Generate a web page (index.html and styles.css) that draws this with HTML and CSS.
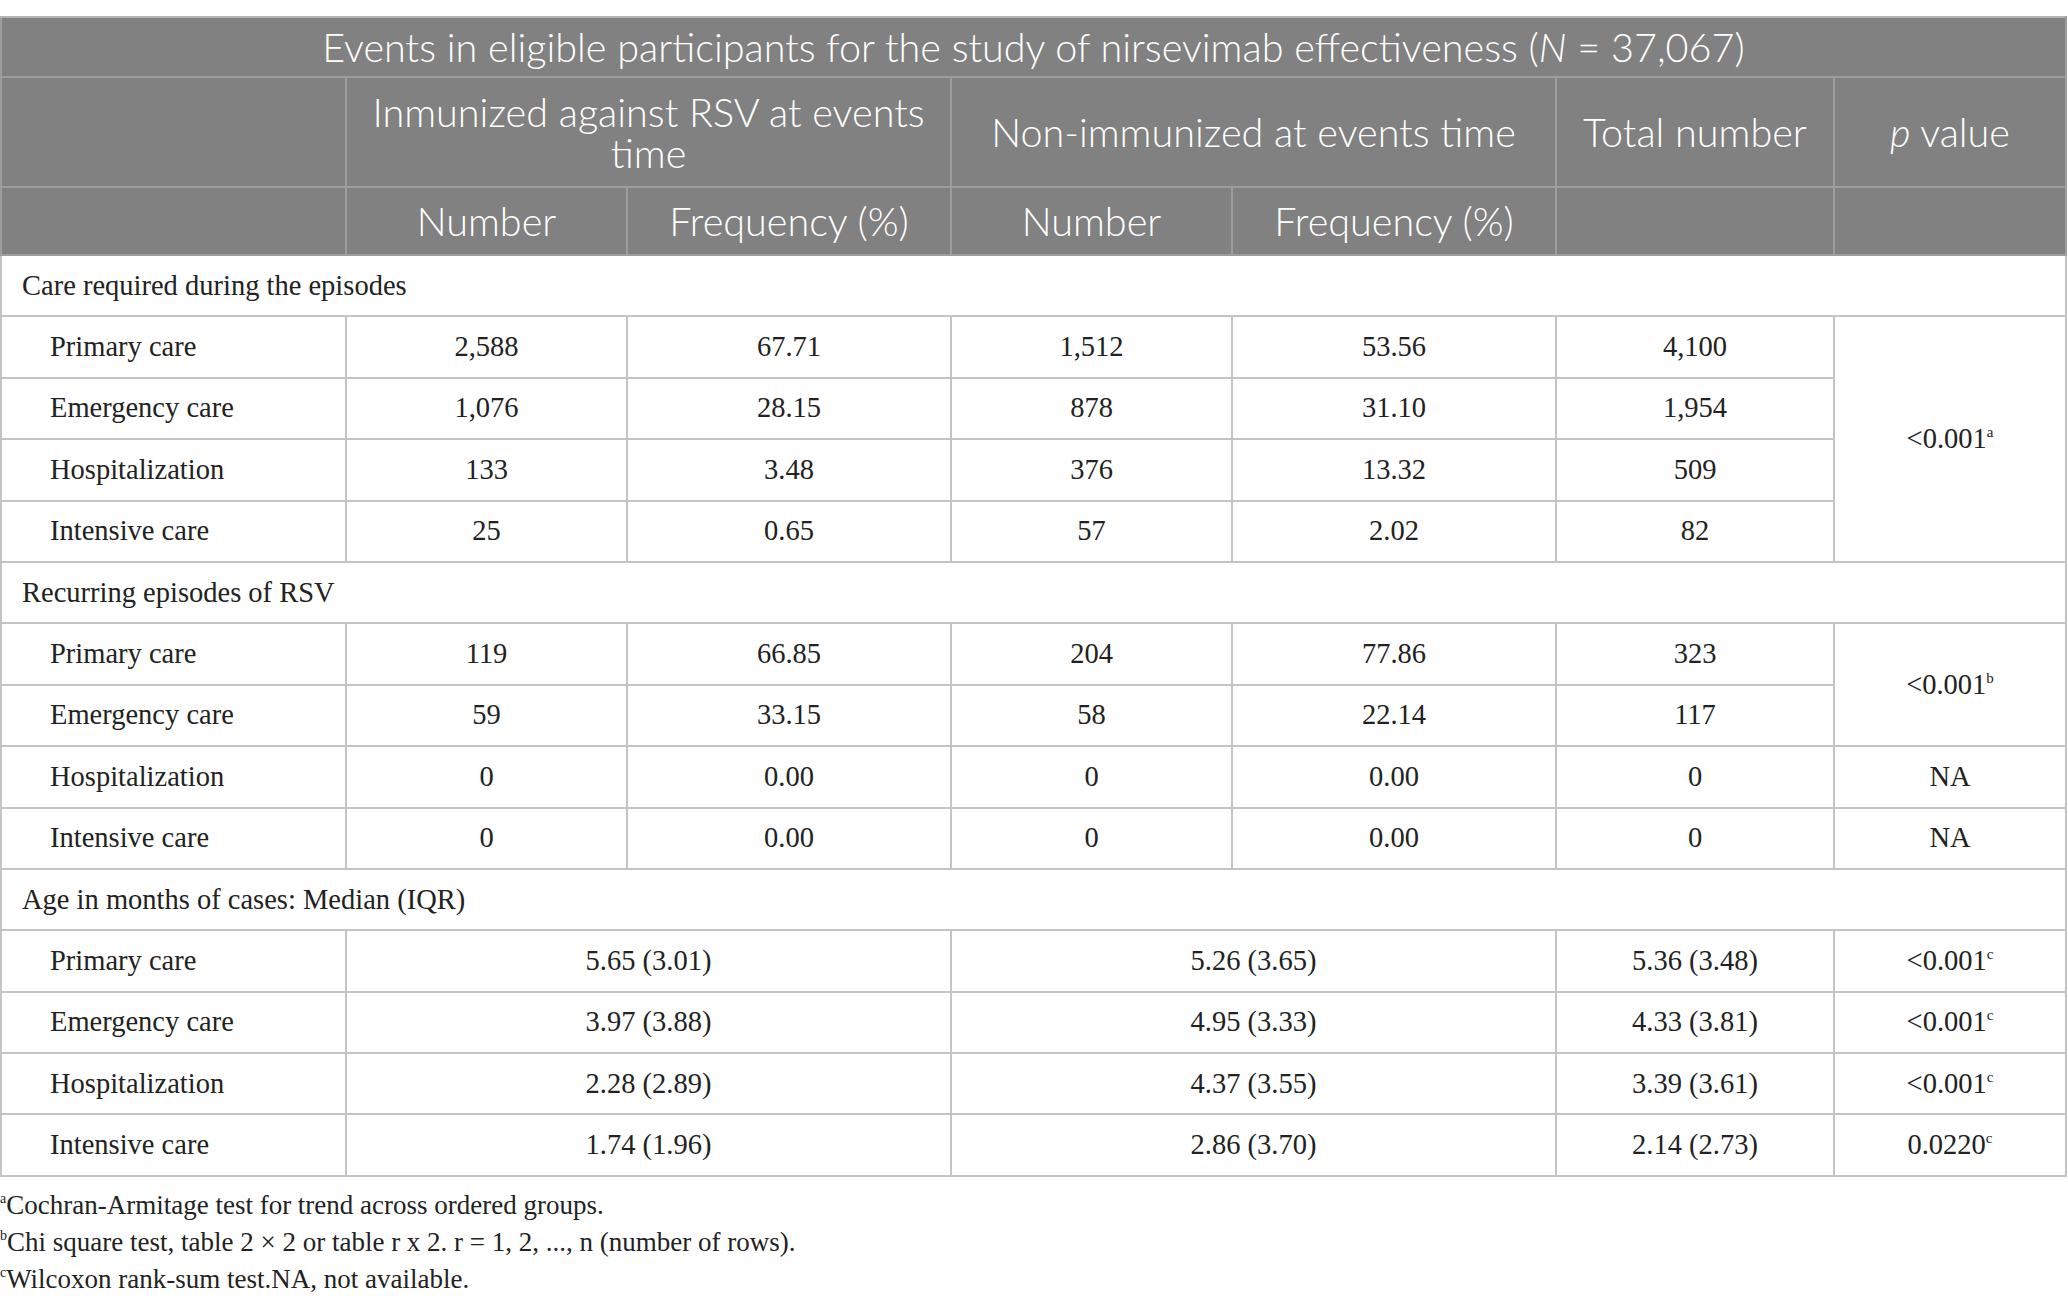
FILE: index.html
```html
<!DOCTYPE html>
<html lang="en">
<head>
  <meta charset="UTF-8">
  <title>Events in eligible participants</title>
  <link rel="stylesheet" href="styles.css">
</head>
<body>
  <div class="page">
    <table class="events">
      <colgroup>
        <col class="c-label">
        <col class="c-num">
        <col class="c-freq">
        <col class="c-num">
        <col class="c-freq">
        <col class="c-total">
        <col class="c-p">
      </colgroup>
      <thead>
        <tr class="h-title">
          <th colspan="7">Events in eligible participants for the study of nirsevimab effectiveness (<i>N</i> = 37,067)</th>
        </tr>
        <tr class="h-group">
          <th></th>
          <th colspan="2" class="wrap">Inmunized against RSV at events time</th>
          <th colspan="2">Non-immunized at events time</th>
          <th>Total number</th>
          <th><i>p</i> value</th>
        </tr>
        <tr class="h-sub">
          <th></th>
          <th>Number</th>
          <th>Frequency (%)</th>
          <th>Number</th>
          <th>Frequency (%)</th>
          <th></th>
          <th></th>
        </tr>
      </thead>
      <tbody>
        <tr class="section"><td colspan="7">Care required during the episodes</td></tr>
        <tr>
          <td class="item">Primary care</td>
          <td>2,588</td><td>67.71</td><td>1,512</td><td>53.56</td><td>4,100</td>
          <td rowspan="4">&lt;0.001<sup>a</sup></td>
        </tr>
        <tr>
          <td class="item">Emergency care</td>
          <td>1,076</td><td>28.15</td><td>878</td><td>31.10</td><td>1,954</td>
        </tr>
        <tr>
          <td class="item">Hospitalization</td>
          <td>133</td><td>3.48</td><td>376</td><td>13.32</td><td>509</td>
        </tr>
        <tr>
          <td class="item">Intensive care</td>
          <td>25</td><td>0.65</td><td>57</td><td>2.02</td><td>82</td>
        </tr>

        <tr class="section"><td colspan="7">Recurring episodes of RSV</td></tr>
        <tr>
          <td class="item">Primary care</td>
          <td>119</td><td>66.85</td><td>204</td><td>77.86</td><td>323</td>
          <td rowspan="2">&lt;0.001<sup>b</sup></td>
        </tr>
        <tr>
          <td class="item">Emergency care</td>
          <td>59</td><td>33.15</td><td>58</td><td>22.14</td><td>117</td>
        </tr>
        <tr>
          <td class="item">Hospitalization</td>
          <td>0</td><td>0.00</td><td>0</td><td>0.00</td><td>0</td><td>NA</td>
        </tr>
        <tr>
          <td class="item">Intensive care</td>
          <td>0</td><td>0.00</td><td>0</td><td>0.00</td><td>0</td><td>NA</td>
        </tr>

        <tr class="section"><td colspan="7">Age in months of cases: Median (IQR)</td></tr>
        <tr>
          <td class="item">Primary care</td>
          <td colspan="2">5.65 (3.01)</td><td colspan="2">5.26 (3.65)</td><td>5.36 (3.48)</td>
          <td>&lt;0.001<sup>c</sup></td>
        </tr>
        <tr>
          <td class="item">Emergency care</td>
          <td colspan="2">3.97 (3.88)</td><td colspan="2">4.95 (3.33)</td><td>4.33 (3.81)</td>
          <td>&lt;0.001<sup>c</sup></td>
        </tr>
        <tr>
          <td class="item">Hospitalization</td>
          <td colspan="2">2.28 (2.89)</td><td colspan="2">4.37 (3.55)</td><td>3.39 (3.61)</td>
          <td>&lt;0.001<sup>c</sup></td>
        </tr>
        <tr>
          <td class="item">Intensive care</td>
          <td colspan="2">1.74 (1.96)</td><td colspan="2">2.86 (3.70)</td><td>2.14 (2.73)</td>
          <td>0.0220<sup>c</sup></td>
        </tr>
      </tbody>
    </table>

    <div class="notes">
      <p><sup>a</sup>Cochran-Armitage test for trend across ordered groups.</p>
      <p><sup>b</sup>Chi square test, table 2 × 2 or table r x 2. r = 1, 2, ..., n (number of rows).</p>
      <p><sup>c</sup>Wilcoxon rank-sum test.NA, not available.</p>
    </div>
  </div>
</body>
</html>
```

FILE: styles.css
```css
body {
  margin: 0;
  background: #fff;
  color: #222;
  font-family: "Liberation Serif", "Times New Roman", serif;
}
.page {
  padding-top: 16px;
}
.events {
  width: 2066px;
  border-collapse: collapse;
  table-layout: fixed;
  font-size: 28.5px;
}
.c-label { width: 345px; }
.c-num { width: 281px; }
.c-freq { width: 324px; }
.c-total { width: 278px; }
.c-p { width: 232px; }

.events th {
  background: #808180;
  color: #fff;
  font-family: Lato, "Open Sans", sans-serif;
  font-weight: 300;
  font-size: 39.6px;
  line-height: 1.04;
  border: 2px solid #9c9d9c;
  padding: 0 14px;
  text-align: center;
}
.events thead tr:first-child th {
  border-top-color: #b5b5b5;
}
.h-title { height: 60px; }
.h-group { height: 110px; }
.h-sub { height: 68px; }
.h-group .wrap {
  padding: 0 18px;
}

.events td {
  border: 2px solid #c4c4c4;
  height: 59.4px;
  padding: 0 12px;
  text-align: center;
  vertical-align: middle;
  line-height: 1.2;
}
.events td.item {
  text-align: left;
  padding-left: 48px;
}
.section td {
  text-align: left;
  padding-left: 20px;
}
.events sup {
  font-size: 15px;
  vertical-align: 11px;
  line-height: 0;
}

.notes {
  padding-top: 10px;
  font-size: 27px;
}
.notes p {
  margin: 0;
  height: 37px;
  line-height: 37px;
}
.notes sup {
  font-size: 14px;
  vertical-align: 11px;
  line-height: 0;
}
```
